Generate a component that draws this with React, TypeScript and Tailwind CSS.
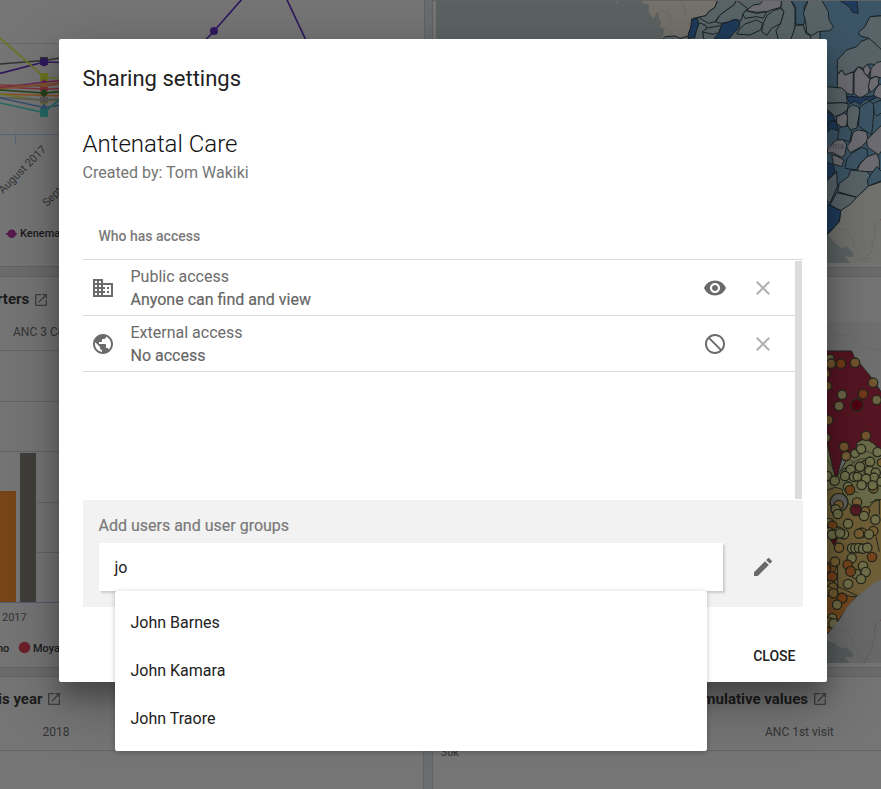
import React from 'react';
import {
  MdClose,
  MdCreate,
  MdDomain,
  MdLaunch,
  MdNotInterested,
  MdPublic,
  MdVisibility,
} from 'react-icons/md';

const card = 'overflow-hidden border border-[#606264] bg-[#757575]';

/* ---------- Line chart ---------- */

const series: [string, string][] = [
  ['#333333', '0,64 44,60.500 80,55'],
  ['#30195f', '0,73.500 44,62 80,63'],
  ['#6b7424', '0,38 44,77 80,81'],
  ['#6d2458', '0,88 44,82 80,79'],
  ['#7e3a32', '0,85 44,86 80,81'],
  ['#80303c', '0,87 44,89 80,88'],
  ['#7a552e', '0,89 44,84 80,81'],
  ['#26401b', '0,90 44,93 80,90'],
  ['#8a4f20', '0,94 44,95.500 80,96'],
  ['#6b7424', '0,94 44,101 80,97'],
  ['#5b5855', '0,97.500 44,100 80,98'],
  ['#34506f', '0,98 44,107.500 80,102'],
  ['#256b62', '0,103 44,112.500 60,99 80,88'],
];

function LineChart() {
  return (
    <svg className="block h-[267px] w-[423px]" viewBox="0 0 423 267">
      <g stroke="#666666">
        <path d="M0 43.500H423" />
        <path d="M0 134.500H423M15.500 134.500V144" stroke="#596573" />
      </g>
      <g fill="none" strokeWidth="1.7">
        {series.map(([c, p], i) => (
          <polyline key={i} points={p} stroke={c} />
        ))}
        <path d="M180 67L214 31L250 -10M280 -15L320 70" stroke="#30195f" />
      </g>
      <circle cx="214" cy="31" r="4" fill="#30195f" />
      <path d="M40 57h8v8h-8z" fill="#333" />
      <circle cx="44" cy="62" r="4.300" fill="#30195f" />
      <path d="M40 73h8v8h-8z" fill="#6b7424" />
      <path d="M44 79l4 5h-8z" fill="#6d2458" />
      <path d="M40 83h8v4h-8z" fill="#7a552e" />
      <path d="M40 87h8v4h-8z" fill="#80303c" />
      <path d="M44 88.500l4.500 4.500-4.500 4.500-4.500-4.500z" fill="#26401b" />
      <circle cx="44" cy="101" r="4" fill="#6b7424" />
      <path d="M40 97h8v6h-8z" fill="#5b5855" />
      <path d="M44 103l4 6h-8z" fill="#34506f" />
      <path d="M40 109h8v8h-8z" fill="#256b62" />
      <g fontFamily="Roboto, sans-serif" fontSize="11" fill="#343434">
        <text transform="translate(3 194) rotate(-45)">August 2017</text>
        <text transform="translate(47 207) rotate(-45)">September 2017</text>
      </g>
      <path d="M6 233.800h11" stroke="#571a4b" strokeWidth="1.500" />
      <circle cx="11.700" cy="233.800" r="4.300" fill="#571a4b" />
      <text x="20" y="237.300" fontFamily="Roboto, sans-serif" fontSize="11" fontWeight="500" fill="#1c1c1c">
        Kenema
      </text>
    </svg>
  );
}

/* ---------- District map ---------- */

const L = '#596469';
const M = '#3c5566';
const D = '#1f3b5b';
const G = '#6d6c72';

const northDistricts: [string, string][] = [
  [L, '726,120 735,110 765,108 780,115 805,108 820,55 835,52 858,47 866,35 885,22 893,0 1400,0 1400,120'],
  [D, '815,57 833,55 835,75 825,110 805,116 805,100 812,85'],
  [L, '838,68 855,75 862,86 848,96 852,120 822,120 830,90'],
  [L, '835,52 858,47 866,35 885,22 893,0 950,0 942,15 920,30 900,45 885,65 865,70'],
  [L, '950,0 962,10 983,25 970,40 963,62 945,58 925,66 905,70 887,66 900,45 920,30 942,15'],
  [D, '880,119 896,100 905,72 925,66 945,58 960,66 956,85 940,100 925,119'],
  [L, '847,96 862,84 885,80 905,76 896,98 880,103'],
  [G, '978,32 1000,15 1020,12 1030,0 1085,0 1083,22 1060,28 1040,35 1010,37'],
  [L, '968,42 978,32 1010,40 1040,35 1030,55 1010,50 975,55'],
  [L, '975,72 1010,60 1028,70 1022,90 990,105 950,102 960,85'],
  [L, '1030,70 1042,45 1060,32 1083,25 1092,36 1082,70 1055,85 1040,106 1025,95'],
  [L, '1083,22 1085,0 1112,0 1125,25 1125,95 1112,120 1075,120 1068,92 1082,70 1092,36'],
  [M, '1112,0 1127,22 1127,72 1150,75 1155,62 1152,20 1165,0'],
  [L, '1127,76 1150,75 1158,100 1172,108 1170,120 1112,120'],
];

const eastDistricts: [string, string][] = [
  [M, '120,0 320,0 320,540 265,558 230,592 182,632 178,665 140,706 120,600'],
  [L, '85,0 125,0 145,35 147,60 160,80 150,92 115,95 95,107 80,98 77,65 70,40'],
  [D, '178,0 230,0 235,40 218,37 208,20 195,12'],
  [L, '270,50 310,47 310,200 275,192 262,193 250,205 235,200 220,216 195,225 185,210 172,222 172,180 200,150 230,140 242,125 267,115 235,102 255,80'],
  [L, '270,50 310,47 310,155 285,130 267,115 242,108 235,98 255,80'],
  [G, '172,225 185,210 195,225 220,216 219,285 195,278 172,262'],
  [G, '222,220 235,200 250,212 262,228 272,240 265,280 240,295 222,280'],
  [G, '250,205 262,193 272,210 265,228 253,220'],
  [G, '273,205 290,188 310,182 310,235 285,230 270,235'],
  [G, '270,238 285,230 297,232 295,255 272,278 265,260'],
  [G, '296,255 310,250 310,300 280,287 285,270'],
  [L, '138,260 185,264 198,275 202,310 190,308 138,310'],
  [D, '200,288 240,292 285,287 288,293 270,302 262,298 250,302 240,314 225,303 210,312'],
  [L, '138,310 190,308 205,312 202,330 185,342 165,350 155,340 138,325'],
  [L, '203,325 218,315 235,320 240,333 230,385 205,390 200,355'],
  [G, '170,350 195,338 203,350 200,378 185,382 170,370'],
  [D, '138,333 155,342 166,362 150,364 145,378 138,380'],
  [D, '147,367 165,362 172,375 172,392 155,385 138,400 140,380'],
  [M, '178,382 203,378 215,395 210,425 188,419 172,422'],
  [G, '220,395 235,390 260,395 264,420 245,440 210,458 200,440 212,425'],
  [M, '240,320 268,303 283,313 280,355 275,405 260,395 235,378'],
  [M, '280,310 303,300 310,335 290,348 283,340'],
  [G, '262,440 260,420 275,405 290,390 310,370 310,445 296,465 275,450'],
  [G, '143,460 142,445 170,420 188,419 200,432 195,465 185,472 158,458'],
  [G, '155,465 170,468 192,480 185,500 160,492'],
  [D, '138,485 160,495 165,515 152,532 138,535'],
  [M, '195,505 200,478 215,460 245,442 262,448 262,470 240,490 230,510'],
  [G, '230,515 240,492 262,470 290,460 298,480 298,515'],
  [L, '138,545 152,532 170,515 172,560 150,610 138,600'],
  [L, '173,575 178,550 205,530 212,510 260,515 280,535 265,558 230,592'],
  [M, '265,558 262,540 275,520 290,500 310,520 310,540'],
  [L, '150,615 170,578 230,592 212,612 182,632'],
  [D, '138,610 182,632 178,665 138,707'],
];

function DistrictMap() {
  return (
    <svg className="ml-[3px] block h-[262px] w-[445px] bg-[#5c6262]" viewBox="436 1 445 262">
      <g transform="scale(.33333)">
        <g transform="translate(1260 0)">
          <path d="M663 0l7 10 17 2-1 21 11 20 8-2 4-12 6 0 2 18 7 6-5 16 14 7-2 18-8 12 H900V0z" fill="#75726c" />
          <path d="M720 35l14-3 22 17M752 25l-14 15 15 16-10 13M780 0q15 20 17 48M723 84l12 1 17 12" fill="none" stroke="#65645f" strokeWidth="2" />
          <g stroke="#192226" strokeWidth="3" strokeLinejoin="round">
            {northDistricts.map(([c, p], i) => (
              <polygon key={i} points={p} fill={c} />
            ))}
          </g>
          <text x="436" y="2" fontFamily="Roboto, sans-serif" fontSize="24" fontWeight="700" textLength="162" fill="#737777">
            Conakry
          </text>
        </g>
        <g transform="translate(2340 0)">
          <path d="M320 530L265 558 182 632 178 665 142 705 175 740 205 790H320z" fill="#72726f" />
          <g stroke="#192226" strokeWidth="3" strokeLinejoin="round">
            {eastDistricts.map(([c, p], i) => (
              <polygon key={i} points={p} fill={c} />
            ))}
          </g>
          <path d="M141 708l20 18 25 20 14-7 20 22-4 10-22-2 18 21h-71z" fill="#5c6262" />
          <path d="M200 690l15 25 10 30 20 20 5 20M165 680l18 8 17 2" fill="none" stroke="#686866" strokeWidth="2" />
          <path d="M303 658l-12 8-8 18 2 20-8 24-2 25-14 15-7 18" fill="none" stroke="#6a5559" strokeWidth="3" strokeDasharray="5 5" />
          <text x="142" y="447" fontFamily="Roboto, sans-serif" fontSize="26" fontWeight="500" fill="#51545c">
            ema •
          </text>
        </g>
      </g>
    </svg>
  );
}

/* ---------- Facility map ---------- */

const OLIVE = '#72734d';
const TAN = '#7a6032';
const ORANGE = '#794117';
const WINE = '#50101e';

const facilities: [number, number, number, string][] = [
  [150, 295, 12, OLIVE], [153, 311, 14, TAN], [183, 311, 14, ORANGE], [225, 308, 14, TAN],
  [138, 341, 12, TAN], [142, 378, 13, TAN], [279, 368, 14, TAN], [249, 402, 14, ORANGE],
  [186, 404, 14, OLIVE], [177, 438, 14, OLIVE], [231, 435, 18, '#500010'], [290, 420, 14, OLIVE],
  [145, 480, 14, TAN], [138, 533, 13, OLIVE], [258, 527, 14, TAN], [192, 560, 14, TAN],
  [225, 580, 13, OLIVE], [198, 588, 14, TAN], [243, 567, 14, OLIVE], [293, 576, 14, OLIVE],
  [257, 614, 13, TAN], [270, 605, 14, OLIVE], [304, 608, 12, TAN], [200, 638, 14, OLIVE],
  [212, 629, 14, OLIVE], [240, 620, 14, OLIVE], [195, 648, 14, OLIVE], [222, 650, 14, OLIVE],
  [268, 632, 14, OLIVE], [287, 638, 14, OLIVE], [142, 648, 14, OLIVE], [164, 662, 14, OLIVE],
  [232, 650, 13, OLIVE], [282, 653, 14, OLIVE], [258, 656, 14, OLIVE], [303, 665, 13, OLIVE],
  [204, 680, 14, OLIVE], [210, 690, 14, ORANGE], [245, 675, 14, OLIVE], [280, 685, 14, TAN],
  [278, 676, 14, OLIVE], [177, 727, 27, '#626262'], [231, 727, 14, TAN], [176, 735, 14, TAN],
  [167, 748, 14, OLIVE], [255, 754, 14, TAN], [228, 750, 17, WINE], [173, 762, 14, OLIVE],
  [252, 768, 14, OLIVE], [286, 779, 14, OLIVE], [147, 789, 14, OLIVE], [157, 797, 14, ORANGE],
  [204, 791, 14, OLIVE], [280, 813, 14, TAN], [147, 817, 14, OLIVE], [176, 815, 14, OLIVE],
  [156, 824, 14, OLIVE], [192, 823, 14, OLIVE], [180, 820, 14, OLIVE], [246, 818, 14, TAN],
  [237, 821, 14, TAN], [267, 823, 14, OLIVE], [177, 863, 14, TAN], [216, 865, 14, OLIVE],
  [226, 865, 14, OLIVE], [237, 864, 14, OLIVE], [249, 866, 14, OLIVE], [262, 863, 14, OLIVE],
  [276, 891, 14, ORANGE], [215, 895, 14, OLIVE], [165, 905, 14, TAN], [203, 914, 14, ORANGE],
  [138, 925, 14, ORANGE], [249, 918, 14, OLIVE], [257, 936, 14, OLIVE], [229, 942, 14, OLIVE],
  [212, 934, 15, ORANGE], [156, 950, 15, ORANGE], [243, 957, 14, OLIVE], [204, 972, 14, OLIVE],
  [151, 975, 14, TAN], [158, 983, 15, TAN], [145, 994, 14, TAN], [160, 1000, 14, TAN],
  [186, 1014, 15, ORANGE], [171, 1034, 14, OLIVE], [157, 1075, 14, OLIVE], [147, 1088, 15, TAN],
  [161, 1091, 15, OLIVE],
];

function FacilityMap() {
  return (
    <svg className="ml-[3px] mt-[45px] block h-[341px] w-[445px] bg-[#707070]" viewBox="436 322 445 341">
      <g transform="translate(780 260) scale(.33333)">
        <path d="M141 230l20-5 14 4 30-6 20 10 15 17 22 15 40 5" fill="none" stroke="#666" strokeWidth="2" />
        <g stroke="#22251f" strokeWidth="3">
          <path d="M130 510l20 60 18 85 62-107 50-30 40 50V780H130z" fill="#6b6c49" />
          <path d="M130 695l35-13 20 5 15 40 30 20 40-8 15-20H320V955L230 1010 200 1045 130 1130z" fill="#706038" />
          <path d="M130 900l40 20-15 35 20 50 55 5-30 35-27 40-43 50z" fill="#744a20" />
          <path d="M130 273h85l7 17 46 55 35 50 17 30V590l-40-40-25-15-25 13 0 23-42 15-20 75-18-75-12-50 8-6H130z" fill="#561523" />
          <path d="M152 840l20-5-8 25z" fill={WINE} />
          <path d="M270 728l28-8M298 720v45M288 830l10 45M172 905l2 75 58 27" fill="none" />
          <path d="M242 580q25-15 45 12M180 650q35-58 85-55M141 600q20 20 25 52M190 720q24-32 45-22M212 600l45 42" fill="none" strokeWidth="2" />
        </g>
        <g stroke="#27281c" strokeWidth="4">
          {facilities.map(([x, y, r, c], i) => (
            <circle key={i} cx={x} cy={y} r={r} fill={c} fillOpacity=".85" />
          ))}
        </g>
        <path d="M320 952L280 970 230 1010 200 1042 180 1078 141 1125 175 1160 205 1210H320z" fill="#696969" />
        <path d="M130 1136l30 12 26 18 14-5 20 22-4 9-22-1 18 22H130z" fill="#565b5c" />
        <path d="M200 1110l15 25 10 30 20 20 5 20M160 1105l23 3 17 2" fill="none" stroke="#606060" strokeWidth="2" />
        <path d="M303 1080l-12 8-8 18 2 20-8 24-2 25-14 15-7 18" fill="none" stroke="#62494c" strokeWidth="3" strokeDasharray="5 5" />
      </g>
    </svg>
  );
}

/* ---------- Dashboard behind the dialog ---------- */

function Dashboard() {
  return (
    <div className="grid h-[789px] w-[881px] grid-cols-[424px_450px] grid-rows-[268px_392px_114px] gap-x-2 gap-y-2 bg-[#6a6c6e]">
      <section className={`${card} -ml-px -mr-px -mt-px mb-px`}>
        <LineChart />
      </section>
      <section className={card}>
        <DistrictMap />
      </section>

      <section className={`${card} -ml-px`}>
        <header className="flex h-[45px] items-center gap-1">
          <h2 className="-ml-[3px] font-[Roboto] text-[15px] font-bold text-[#1c1c1c]">rters</h2>
          <MdLaunch className="h-4 w-4 text-[#3f3f3f]" />
        </header>
        <p className="ml-[13px] h-[28px] pt-[2px] font-[Roboto] text-[12px] leading-[16px] text-[#343434]">ANC 3 Coverage</p>
        <svg className="block h-[317px] w-[423px]" viewBox="0 350 423 317">
          <path d="M0 350.500H423M0 401.500H423M0 451.500H423M0 502.500H423M0 552.500H423" stroke="#646464" />
          <path d="M16 480h4v122h-4zM36 480h1v122h-1z" fill="#757575" />
          <path d="M0 491h16v111H0z" fill="#774517" />
          <path d="M20 453h16v149H20z" fill="#3f3e3a" />
          <path d="M0 602.500H423" stroke="#585870" />
          <g fontFamily="Roboto, sans-serif" fontSize="11">
            <text x="2" y="621" fill="#343434">2017</text>
            <text x="-3" y="652" fontWeight="500" fill="#1c1c1c">no</text>
            <circle cx="24.500" cy="647.500" r="5.700" fill="#6b2028" />
            <text x="33" y="652" fontWeight="500" fill="#1c1c1c">Moyamba</text>
          </g>
        </svg>
      </section>
      <section className={card}>
        <FacilityMap />
      </section>

      <section className={`${card} -ml-px`}>
        <header className="flex h-[44px] items-center gap-1">
          <h2 className="-ml-[2px] font-[Roboto] text-[15px] font-bold text-[#1c1c1c]">is year</h2>
          <MdLaunch className="h-4 w-4 text-[#3f3f3f]" />
        </header>
        <p className="h-[30px] border-b border-[#666] pl-[42.500px] pt-[3px] font-[Roboto] text-[12px] leading-[16px] text-[#343434]">2018</p>
      </section>
      <section className={card}>
        <header className="flex h-[44px] items-center justify-end gap-1 pr-[53px]">
          <h2 className="whitespace-nowrap font-[Roboto] text-[15px] font-bold text-[#1c1c1c]">ANC: Cumulative values</h2>
          <MdLaunch className="h-4 w-4 text-[#3f3f3f]" />
        </header>
        <p className="h-[30px] border-b border-[#666] pl-[332px] pt-[3px] font-[Roboto] text-[12px] leading-[16px] text-[#343434]">ANC 1st visit</p>
        <p className="-mt-[5px] ml-2 font-[Roboto] text-[11px] leading-[14px] text-[#343434]">30k</p>
      </section>
    </div>
  );
}

/* ---------- Dialog ---------- */

function AccessRow({ icon, title, detail, action }: {
  icon: React.ReactNode;
  title: string;
  detail: string;
  action: React.ReactNode;
}) {
  return (
    <li className="flex h-14 items-center border-b border-[#dbdbdb] pl-2 pr-5 text-[#6b6b6b]">
      <span className="text-2xl">{icon}</span>
      <div className="-ml-[0.5px] flex-1 pl-4 text-[16px] leading-[23px]">
        <div>{title}</div>
        <div className="text-[#656565] [-webkit-text-stroke:0.2px_#6b6b6b]">{detail}</div>
      </div>
      <span className="text-2xl">{action}</span>
      <MdClose className="ml-6 h-6 w-6 text-[#b0b0b0]" />
    </li>
  );
}

function SharingDialog() {
  return (
    <div
      role="dialog"
      className="absolute left-[59px] top-[39px] h-[643px] w-[768px] rounded-[2px] bg-white px-6 font-[Roboto] shadow-[0_19px_60px_rgba(0,0,0,.3),0_15px_20px_rgba(0,0,0,.22)]"
    >
      <h1 className="-ml-[0.5px] pt-[25px] text-[22px] leading-[30px] text-[#212121]">Sharing settings</h1>
      <h2 className="-ml-[0.5px] mt-[34px] text-[24px] font-light leading-[32px] text-[#111]">Antenatal Care</h2>
      <p className="-ml-[0.5px] mt-[2px] text-[16px] leading-[22px] text-[#757575]">Created by: Tom Wakiki</p>
      <h3 className="mt-[36px] flex h-[40px] items-center border-b border-[#dbdbdb] pb-[7px] pl-[15.500px] text-[14px] font-medium text-[#7a7a7a]">
        Who has access
      </h3>
      <div className="flex h-[240px]">
        <ul className="flex-1">
          <AccessRow icon={<MdDomain />} title="Public access" detail="Anyone can find and view" action={<MdVisibility />} />
          <AccessRow icon={<MdPublic />} title="External access" detail="No access" action={<MdNotInterested />} />
        </ul>
        <div className="mr-px mt-px h-[238px] w-[7px] bg-[#dcdcdc]" />
      </div>
      <div className="h-[107px] bg-[#f2f2f2] pl-4 pt-[15px]">
        <label className="-ml-[0.5px] block text-[16px] leading-[22px] text-[#7a7a7a] [-webkit-text-stroke:0.2px_#7a7a7a]">Add users and user groups</label>
        <div className="mt-[6px] flex items-center">
          <div className="flex h-12 w-[624px] items-center bg-white pl-[15.500px] pt-[2px] text-[16px] text-[#212121] shadow-[2px_2px_2px_#ccc]">jo</div>
          <MdCreate className="ml-7 h-6 w-6 text-[#696969]" />
        </div>
      </div>
      <button className="ml-auto mr-[7.500px] mt-[38px] block text-[14px] font-medium leading-[22px] text-[#212121]">CLOSE</button>
    </div>
  );
}

export default function App() {
  return (
    <main className="relative h-[789px] w-[881px] overflow-hidden">
      <Dashboard />
      <SharingDialog />
      <ul className="absolute left-[115px] top-[591px] h-[160px] w-[592px] rounded-[2px] bg-white py-2 font-[Roboto] text-[16px] leading-[48px] text-[#212121] shadow-[0_1px_6px_rgba(0,0,0,.12),0_1px_4px_rgba(0,0,0,.12)]">
        {['John Barnes', 'John Kamara', 'John Traore'].map((name) => (
          <li key={name} className="h-12 pl-[15.500px]">{name}</li>
        ))}
      </ul>
    </main>
  );
}
